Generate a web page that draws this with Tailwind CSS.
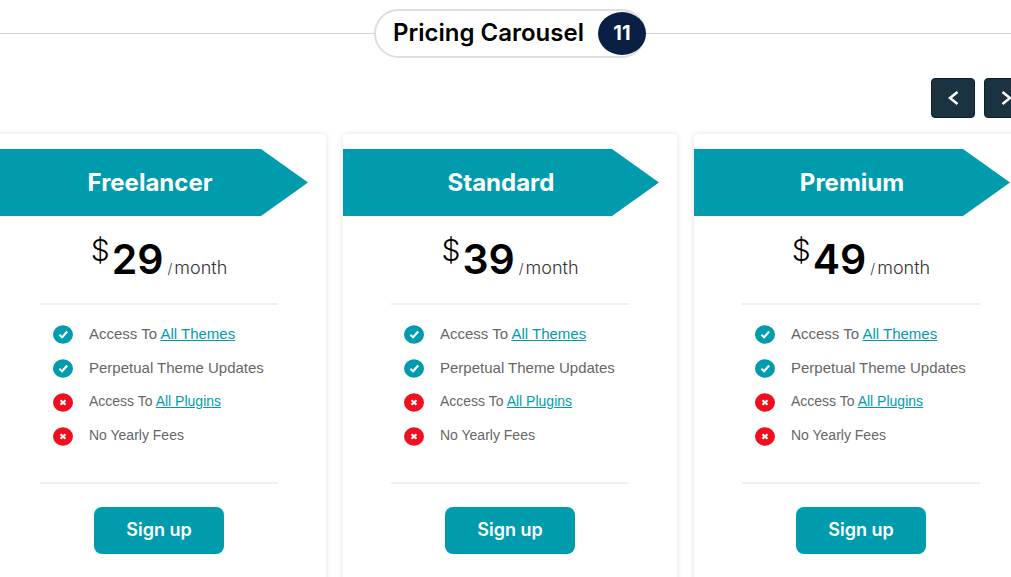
<!DOCTYPE html>
<html lang="en">
  <head>
    <meta charset="UTF-8" />
    <title>Pricing Carousel</title>
    <meta name="viewport" content="width=device-width, initial-scale=1" />
    <script src="https://cdn.jsdelivr.net/npm/@tailwindcss/browser@4"></script>
  </head>
  <body class="overflow-hidden bg-white font-['Inter',sans-serif] text-black">
    <!-- The header and the track run past both edges of the window -->
    <header class="-mr-[17px] -ml-2 flex items-center pt-[9px]">
      <div class="h-px flex-1 bg-[#d4d4d4]"></div>
      <div
        class="flex h-[49px] items-center justify-between rounded-full border-2 border-[#dedede] bg-white pl-[17px]"
      >
        <h1 class="mr-[14px] pb-[2px] text-2xl leading-6 font-semibold">
          Pricing Carousel
        </h1>
        <span
          class="-mr-[2px] flex h-[43px] w-[48px] items-center justify-center rounded-[50%] bg-[#0a1f44] pb-[2px] text-xl font-bold text-white"
          >11</span
        >
      </div>
      <div class="h-px flex-1 bg-[#d4d4d4]"></div>
    </header>

    <main class="-mr-[17px] -ml-2">
      <nav class="mt-5 flex justify-end gap-[9px]">
        <button
          type="button"
          aria-label="Previous"
          class="flex h-[40px] w-[44px] items-center justify-center rounded border border-[#10202a] bg-[#1b3340] pb-px"
        >
          <svg class="h-[16px] w-[16px]" viewBox="0 0 16 16" fill="none" stroke="#fff" stroke-width="2.5">
            <path d="M12.500 2 5 8l7.500 6" />
          </svg>
        </button>
        <button
          type="button"
          aria-label="Next"
          class="flex h-[40px] w-[44px] items-center justify-center rounded border border-[#10202a] bg-[#1b3340] pb-px"
        >
          <svg class="h-[16px] w-[16px]" viewBox="0 0 16 16" fill="none" stroke="#fff" stroke-width="2.5">
            <path d="M4.500 2 12 8l-7.500 6" />
          </svg>
        </button>
      </nav>

      <div id="plans" class="mt-4 grid grid-cols-3 gap-[17px]"></div>
    </main>

    <script type="text/javascript">
      const plans = [
        { name: "Freelancer", price: 29 },
        { name: "Standard", price: 39 },
        { name: "Premium", price: 49 },
      ];

      const link = (text) =>
        `<a href="#" class="text-[#009cae] underline">${text}</a>`;

      const features = [
        { text: `Access To ${link("All Themes")}`, included: true },
        { text: "Perpetual Theme Updates", included: true },
        { text: `Access To ${link("All Plugins")}`, included: false },
        { text: "No Yearly Fees", included: false },
      ];

      const checkIcon = `
        <svg class="h-[19px] w-5 shrink-0" viewBox="0 0 20 19" preserveAspectRatio="none">
          <ellipse cx="10" cy="9.500" rx="10" ry="9.300" fill="#009cae" />
          <path d="M6.400 9.800 9.100 12.200 14.200 6.600" fill="none" stroke="#fff" stroke-width="2.200" />
        </svg>`;

      const crossIcon = `
        <svg class="h-[19px] w-5 shrink-0" viewBox="0 0 20 19" preserveAspectRatio="none">
          <ellipse cx="10" cy="9.500" rx="10" ry="9.300" fill="#f20d1f" />
          <path d="M7.500 7.200 12.500 11.800M12.500 7.200 7.500 11.800" fill="none" stroke="#fff" stroke-width="2.200" />
        </svg>`;

      const featureList = features
        .map(
          (feature) => `
            <li class="flex items-center gap-4">
              ${feature.included ? checkIcon : crossIcon}
              <span class="pb-px leading-[19px] whitespace-nowrap ${
                feature.included ? "text-[15px]" : "text-[14px]"
              }">${feature.text}</span>
            </li>`
        )
        .join("");

      document.getElementById("plans").innerHTML = plans
        .map(
          (plan) => `
            <section class="rounded-sm bg-white pt-[15px] pb-10 shadow-[0_0_6px_rgba(0,0,0,0.12)]">
              <h2 class="mr-[18px] flex h-[67px] items-center justify-center bg-[#009cae] text-2xl font-bold text-white [clip-path:polygon(0_0,calc(100%-47px)_0,100%_50%,calc(100%-47px)_100%,0_100%)]">${plan.name}</h2>
              <p class="mt-4 flex h-[48px] items-baseline justify-center">
                <sup class="top-0 self-start text-[30px] leading-9 font-light">$</sup>
                <span class="ml-[2px] text-[41px] leading-[54px] font-semibold">${plan.price}</span>
                <span class="ml-1 text-sm font-light text-[#333]">/</span>
                <span class="ml-[2px] text-lg font-light text-[#333]">month</span>
              </p>
              <div class="mx-12 mt-[23px] border-y-2 border-[#efefef] pt-[19px] pb-9">
                <ul class="flex flex-col gap-[14px] pl-[13px] font-['Liberation_Sans',sans-serif] text-[#666]">
                  ${featureList}
                </ul>
              </div>
              <div class="mt-[23px] flex justify-center">
                <button type="button" class="h-[47px] w-[130px] rounded-lg bg-[#009cae] pb-[2px] text-lg font-semibold text-white">Sign up</button>
              </div>
            </section>`
        )
        .join("");
    </script>
  </body>
</html>
